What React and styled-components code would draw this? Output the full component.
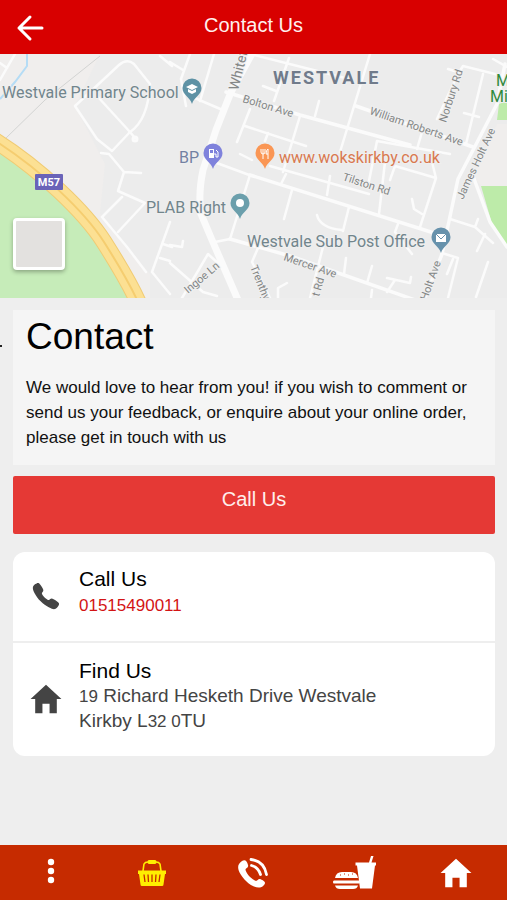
import React from 'react';
import styled, { createGlobalStyle } from 'styled-components';
import { IoCall } from 'react-icons/io5';
import { IoMdHome } from 'react-icons/io';

const GlobalStyle = createGlobalStyle`
  * {
    box-sizing: border-box;
  }
  body {
    margin: 0;
    background: #eeeeee;
    font-family: 'Liberation Sans', Arial, sans-serif;
    color: #111;
  }
`;

const Page = styled.div`
  min-height: 100vh;
  display: flex;
  flex-direction: column;
  overflow-x: hidden;
`;

const Header = styled.header`
  height: 54px;
  flex: none;
  display: grid;
  grid-template-columns: 60px 1fr 60px;
  background: #d80000;
  color: #fff0ee;
`;

const HeaderTitle = styled.h1`
  margin: 0;
  padding-top: 13px;
  font-size: 20px;
  line-height: 24px;
  font-weight: 400;
  text-align: center;
`;

const BackButton = styled.button`
  display: flex;
  align-items: center;
  justify-content: center;
  padding: 2px 0 0;
  border: none;
  background: none;
  color: #fff;
  cursor: pointer;
`;

const MapArea = styled.section`
  position: relative;
  flex: none;
  height: 244px;
  overflow: hidden;
  background: #ececec;
`;

const MapDrawing = styled.svg`
  display: block;
  width: 100%;
  height: 100%;
  font-family: Roboto, sans-serif;
`;

const MapTypeButton = styled.button`
  position: absolute;
  left: 13px;
  bottom: 28px;
  width: 52px;
  height: 52px;
  padding: 0;
  border: 3px solid #fff;
  border-radius: 4px;
  background: #e3e1df;
  box-shadow: 0 2px 4px rgba(0, 0, 0, 0.3);
  cursor: pointer;
`;

const Content = styled.main`
  flex: 1;
  padding: 12px 12px 24px 13px;
`;

const Intro = styled.section`
  position: relative;
  padding: 6px 13px 15px;
  background: #f5f5f5;

  &::before {
    content: '';
    position: absolute;
    left: -14px;
    top: 35px;
    width: 3px;
    height: 2px;
    background: #222;
  }
`;

const IntroTitle = styled.h2`
  margin: 0 0 17px;
  color: #000;
  font-size: 37px;
  line-height: 42px;
  font-weight: 400;
`;

const IntroText = styled.p`
  margin: 0;
  font-size: 17px;
  line-height: 25px;
`;

const CallButton = styled.button`
  display: block;
  width: 100%;
  height: 58px;
  margin: 11px 0 18px;
  padding: 0 0 12px;
  border: none;
  border-radius: 2px;
  background: #e53935;
  color: #ffeeec;
  font-family: inherit;
  font-size: 20px;
  line-height: 24px;
  cursor: pointer;
`;

const Card = styled.section`
  overflow: hidden;
  border-radius: 12px;
  background: #fff;
`;

const CardRow = styled.div`
  display: flex;
  align-items: center;
  min-height: ${({ $tall }) => ($tall ? '115px' : '89px')};
  padding-bottom: 8px;

  & + & {
    border-top: 2px solid #eeeeee;
  }
`;

const RowIcon = styled.div`
  flex: none;
  width: 66px;
  display: flex;
  justify-content: center;
  padding-top: 7px;
  color: #444;
`;

const RowTitle = styled.h3`
  margin: 0;
  color: #000;
  font-size: 21px;
  line-height: 26px;
  font-weight: 400;
`;

const PhoneLink = styled.a`
  display: block;
  color: #d31414;
  font-size: 17px;
  line-height: 27px;
  text-decoration: none;
`;

const Address = styled.address`
  max-width: 320px;
  color: #444;
  font-size: 19px;
  line-height: 24px;
  font-style: normal;
`;

const Digits = styled.span`
  font-size: 17px;
`;

const TabBar = styled.nav`
  position: sticky;
  bottom: 0;
  flex: none;
  height: 55px;
  display: grid;
  grid-template-columns: repeat(5, 1fr);
  background: #c62b00;
`;

const Tab = styled.button`
  display: flex;
  align-items: center;
  justify-content: center;
  padding: 0;
  border: none;
  background: none;
  color: ${({ $active }) => ($active ? '#ffee00' : '#fff')};
  cursor: pointer;
`;

const minorRoads = [
  'M15 0L0 26M0 9L7 14',
  'M75 52L119 11Q127 4 134 10L150 30Q148 66 130 78L112 97L97 85L75 52',
  'M98 43L130 78L135 84M101 99L109 100L124 118L141 119M124 118L118 137L145 149L118 178',
  'M122 143L102 163L127 193L146 218M170 168L152 218L170 240M160 204L170 207M163 190L172 193',
  'M160 2L172 12M170 8L183 16M190 0L181 25L186 52M214 0L200 47M190 42L225 57',
  'M250 0L345 24M289 4L274 47M263 32L276 37M319 47L315 62M250 55L237 88M245 72L306 92M268 79L265 87M240 100L252 106',
  'M300 62L283 118M206 105L252 122M270 112L369 140M370 0L340 98',
  'M369 127L377 87L450 100M417 95L422 78M390 126L395 112L436 124L420 173M436 124L432 108',
  'M437 65L458 20L463 12L503 22M448 15L458 18M483 20L466 90M464 59L479 63M493 5L507 13',
  'M250 121L230 185M286 120L281 130M292 136L284 165M330 122L327 141M317 161Q320 174 342 176',
  'M215 188L230 185M258 194L252 208L270 244M219 210L208 200L182 244M170 191L182 193L183 187',
  'M170 209L203 238L217 242M278 244L278 234L287 229M325 185L310 244M349 153L343 177M385 108L379 160',
  'M412 145L414 155L422 160M450 165L475 173L493 189M475 173L478 165M485 180L477 197M442 199L458 204L448 244',
  'M344 220L346 204M367 229L372 212M387 224L410 229L411 223M395 226L387 238M372 236L371 244M398 170L395 178L412 200M488 208L476 243M453 205L447 220',
];

const streets = [
  'M226 38L300 61L410 91',
  'M356 52L473 93',
  'M505 10L497 50L458 125L442 200L425 244',
  'M250 121L434 179',
  'M230 185L290 202L415 246',
  'M473 122L490 168L507 193',
];

const places = [
  { x: 2, y: 44, text: 'Westvale Primary School' },
  { x: 179, y: 109, text: 'BP', fill: '#7381a2' },
  { x: 279, y: 109, text: 'www.wokskirkby.co.uk', fill: '#d9794f' },
  { x: 146, y: 159, text: 'PLAB Right' },
  { x: 247, y: 193, text: 'Westvale Sub Post Office' },
];

const roadNames = [
  { x: 242, y: 48, angle: 17, text: 'Bolton Ave' },
  { x: 369, y: 60, angle: 19, text: 'William Roberts Ave' },
  { x: 446, y: 69, angle: -72, text: 'Norbury Rd' },
  { x: 463, y: 146, angle: -65, text: 'James Holt Ave' },
  { x: 342, y: 126, angle: 18, text: 'Tilston Rd' },
  { x: 283, y: 206, angle: 19, text: 'Mercer Ave' },
  { x: 188, y: 240, angle: -40, text: 'Ingoe Ln' },
  { x: 250, y: 213, angle: 68, text: 'Trenthy' },
  { x: 319, y: 243, angle: -74, text: 't Rd' },
  { x: 427, y: 247, angle: -70, text: 'Holt Ave' },
];

function Pin({ x, y, color, children }) {
  return (
    <g transform={`translate(${x} ${y})`}>
      <path d="M0 15C-2 8-9.500 6-9.500-1A9.500 9.500 0 0 1 9.500-1C9.500 6 2 8 0 15Z" fill={color} />
      {children}
    </g>
  );
}

function StreetMap() {
  return (
    <MapDrawing viewBox="0 0 507 244" preserveAspectRatio="xMidYMid slice" role="img" aria-label="Map of Westvale">
      <rect width="507" height="244" fill="#ececec" />
      <path d="M0 0H100L75 52L105 110L100 160L150 220V244H0Z" fill="#f0eeed" />
      <path d="M0 86C40 112 85 158 104 188S130 230 138 244H0Z" fill="#c6ecb9" />
      <path d="M507 70L497 70L473 122L481 132H507Z" fill="#f0eeed" />
      <path d="M507 47L499 50L497 66H507ZM481 132H507V193L493 173Z" fill="#bdeba9" />
      <path d="M27 0V12L15 28L0 45" fill="none" stroke="#b5dcf5" strokeWidth="2" />
      <path d="M100 2L45 46L5 85" fill="none" stroke="#d3d4d3" />
      <g fill="none" stroke="#fbfbfb" strokeLinejoin="round" strokeLinecap="round">
        {minorRoads.map((d) => (
          <path key={d} d={d} strokeWidth="2.5" />
        ))}
        {streets.map((d) => (
          <path key={d} d={d} strokeWidth="3.5" />
        ))}
        <path d="M254 -4L231 38L216 76L203 116Q198 140 201 160L212 186L238 246" strokeWidth="7" />
        <circle cx="135" cy="85" r="2" strokeWidth="3" />
      </g>
      <g fill="none">
        <path d="M-6 86C40 115 85 158 104 188S130 230 138 248" stroke="#f0cb74" strokeWidth="17" />
        <path d="M-6 86C40 115 85 158 104 188S130 230 138 248" stroke="#fce093" strokeWidth="15" />
        <path d="M-6 86C40 115 85 158 104 188S130 230 138 248" stroke="#f5cd70" strokeWidth="2" />
      </g>
      <rect x="35" y="120" width="28" height="16" rx="1" fill="#6a63b8" />
      <text x="49" y="132" textAnchor="middle" fontSize="11" fontWeight="700" fill="#fff">
        M57
      </text>
      <g fontSize="11" fill="#838686" stroke="#f0f0f0" strokeWidth="2" paintOrder="stroke">
        {roadNames.map((road) => (
          <text key={road.text} transform={`translate(${road.x} ${road.y}) rotate(${road.angle})`}>
            {road.text}
          </text>
        ))}
        <text fontSize="14" transform="translate(238 37) rotate(-76)">
          Whitefield
        </text>
      </g>
      <g fontSize="16" stroke="#efefef" strokeWidth="2" paintOrder="stroke">
        {places.map((place) => (
          <text key={place.text} x={place.x} y={place.y} fill={place.fill || '#71858c'}>
            {place.text}
          </text>
        ))}
        <text x="273" y="30" fontSize="18" fontWeight="700" letterSpacing="2" fill="#707b8b">
          WESTVALE
        </text>
        <text x="496" y="32" fill="#2f8a3c">
          Millbrook
        </text>
        <text x="490" y="48" fill="#2f8a3c">
          Millennium
        </text>
      </g>
      <Pin x={192} y={35} color="#5e92a5">
        <path d="M-6 -2L0 -5L6 -2L0 1ZM-4 0V3L0 5L4 3V0L0 2Z" fill="#fff" />
      </Pin>
      <Pin x={213} y={100} color="#7f82dc">
        <path d="M-4 -5H1V4H-4ZM-3 -4V-1H0V-4Z" fill="#fff" fillRule="evenodd" />
        <path d="M1 0H3V3H5V-2L3 -4" fill="none" stroke="#fff" />
      </Pin>
      <Pin x={265} y={100} color="#fa9654">
        <path d="M-4 -5V-2Q-4 0 -2 0V5M0 -5V-2Q0 0 -2 0M-2 -5V0M3 5V-5Q1 -4 1 0H3" fill="none" stroke="#fff" />
      </Pin>
      <Pin x={240} y={150} color="#6b9fac">
        <circle cx="0" cy="-1" r="4" fill="#fff" />
      </Pin>
      <Pin x={441} y={184} color="#6792ac">
        <rect x="-5" y="-4" width="10" height="8" fill="#fff" />
        <path d="M-5 -4L0 1L5 -4" fill="none" stroke="#6792ac" />
      </Pin>
    </MapDrawing>
  );
}

const BackIcon = () => (
  <svg width="28" height="28" viewBox="0 0 28 28" fill="none" stroke="currentColor" strokeWidth="3" strokeLinecap="round" strokeLinejoin="round">
    <path d="M26 14H3M14 3L3 14L14 25" />
  </svg>
);

const MoreIcon = () => (
  <svg width="8" height="30" viewBox="0 0 8 30" fill="currentColor">
    <circle cx="4" cy="4" r="3.2" />
    <circle cx="4" cy="13" r="3.2" />
    <circle cx="4" cy="22" r="3.2" />
  </svg>
);

const BasketIcon = () => (
  <svg width="28" height="28" viewBox="0 0 28 28" fill="none">
    <path d="M5 12L6 5Q7 3 10 3H18Q21 3 22 5L23 12" stroke="currentColor" strokeWidth="1.6" />
    <path d="M11 1H17Q18.500 1 18.500 3T17 5H11Q9.500 5 9.500 3T11 1Z" fill="currentColor" />
    <path d="M0 11.500H28V15H27L25.500 25.500Q25.500 27 24 27H4Q2.500 27 2.500 25.500L1 15H0Z" fill="currentColor" />
    <path d="M6 15.500L7 23M10 15.500L10.500 23M14 15.500V23M18 15.500L17.500 23M22 15.500L21 23" stroke="#c62b00" strokeWidth="1.3" />
  </svg>
);

const RingingPhoneIcon = () => (
  <svg width="32" height="32" viewBox="0 0 32 32" fill="none">
    <path
      d="M5 4C8 2 10 4 11 8C12 11 8 11 8.500 13C10 18 15 22 19 24C21 24 21 21 24 22.500C28 24 29 26 27 28C23 33 15 30 9 24C3 18-3 9 5 4Z"
      fill="currentColor"
    />
    <path d="M14.500 8.500Q21 10 23.500 17.500M14 2.500Q27 4 29.500 17.500" stroke="currentColor" strokeWidth="2.800" strokeLinecap="round" />
  </svg>
);

const MenuIcon = () => (
  <svg width="44" height="34" viewBox="0 0 44 34" fill="currentColor">
    <path d="M2 22Q3 16 9 16H18Q24 16 25 22ZM1 24.500H26Q27 24.500 27 26T26 27.500H1Q0 27.500 0 26T1 24.500ZM2 29.500H25Q24 33 20 33H7Q3 33 2 29.500Z" />
    <path d="M7 19H8M11 18H12M15 19H16M19 18H20" stroke="#c62b00" />
    <path d="M22.500 6.500H36L38 0H40.500L38.500 6.500H43V9.500H42L39 32.500H27L24 9.500H22.500Z" />
  </svg>
);

export default function App() {
  return (
    <Page>
      <GlobalStyle />
      <Header>
        <BackButton aria-label="Back">
          <BackIcon />
        </BackButton>
        <HeaderTitle>Contact Us</HeaderTitle>
      </Header>

      <MapArea>
        <StreetMap />
        <MapTypeButton aria-label="Change map type" />
      </MapArea>

      <Content>
        <Intro>
          <IntroTitle>Contact</IntroTitle>
          <IntroText>
            We would love to hear from you! if you wish to comment or send us your feedback, or enquire about your
            online order, please get in touch with us
          </IntroText>
        </Intro>

        <CallButton>Call Us</CallButton>

        <Card>
          <CardRow>
            <RowIcon>
              <IoCall size={30} />
            </RowIcon>
            <div>
              <RowTitle>Call Us</RowTitle>
              <PhoneLink href="tel:01515490011">01515490011</PhoneLink>
            </div>
          </CardRow>
          <CardRow $tall>
            <RowIcon>
              <IoMdHome size={38} />
            </RowIcon>
            <div>
              <RowTitle>Find Us</RowTitle>
              <Address>
                <Digits>19</Digits> Richard Hesketh Drive Westvale Kirkby L<Digits>32 0</Digits>TU
              </Address>
            </div>
          </CardRow>
        </Card>
      </Content>

      <TabBar>
        <Tab aria-label="More">
          <MoreIcon />
        </Tab>
        <Tab aria-label="Basket" $active>
          <BasketIcon />
        </Tab>
        <Tab aria-label="Call">
          <RingingPhoneIcon />
        </Tab>
        <Tab aria-label="Food menu">
          <MenuIcon />
        </Tab>
        <Tab aria-label="Home">
          <IoMdHome size={38} />
        </Tab>
      </TabBar>
    </Page>
  );
}
